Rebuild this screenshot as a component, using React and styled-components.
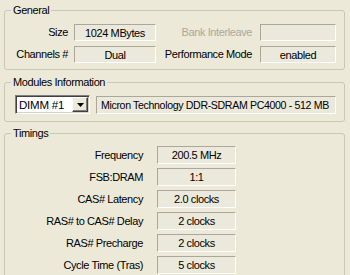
import React from 'react';
import styled, { createGlobalStyle } from 'styled-components';

const GlobalStyle = createGlobalStyle`
  html, body {
    margin: 0;
    padding: 0;
    background: #ece9d8;
  }
  body {
    font-family: "Liberation Sans", Arial, sans-serif;
    font-size: 11px;
    letter-spacing: -0.4px;
    color: #000;
  }
`;

const Window = styled.div`
  width: 350px;
  height: 275px;
  overflow: hidden;
  padding: 4px 5px 0 4px;
  box-sizing: border-box;
  display: flex;
  flex-direction: column;
  gap: ${p => p.gap || 6}px;
`;

const Group = styled.fieldset`
  margin: 0;
  margin-top: ${p => p.top || 0}px;
  border: 1px solid #c9c7b6;
  border-radius: 3px;
  padding: ${p => p.pad || '7px 8px 6px 0'};
  min-width: 0;
  flex-shrink: 0;
`;

const Legend = styled.legend`
  padding: 0 2px;
  margin-left: 6px;
  line-height: 13px;
  color: #000;
`;

const GeneralGrid = styled.div`
  display: grid;
  grid-template-columns: 63px 82px 1fr 76px;
  column-gap: 6px;
  row-gap: 5px;
  align-items: center;
`;

const Label = styled.div`
  text-align: right;
  padding-right: ${p => p.pr || 0}px;
  color: ${p => (p.disabled ? '#aca899' : '#000')};
  white-space: nowrap;
  min-height: 13px;
`;

const Value = styled.div`
  height: ${p => p.h || 17}px;
  box-sizing: border-box;
  border-top: 1px solid #aca899;
  border-left: 1px solid #aca899;
  border-right: 1px solid #ffffff;
  border-bottom: 1px solid #ffffff;
  background: #ebe9db;
  display: flex;
  align-items: center;
  justify-content: ${p => (p.left ? 'flex-start' : 'center')};
  padding-left: ${p => (p.left ? 5 : 0)}px;
  white-space: nowrap;
  overflow: hidden;
`;

const ModulesRow = styled.div`
  display: flex;
  align-items: center;
  gap: 6px;
  padding-left: 10px;
`;

const Select = styled.div`
  width: 75px;
  height: 19px;
  box-sizing: border-box;
  display: flex;
  background: #fff;
  border-top: 1px solid #808080;
  border-left: 1px solid #808080;
  border-right: 1px solid #fff;
  border-bottom: 1px solid #fff;
  box-shadow: inset 1px 1px 0 #404040, inset -1px -1px 0 #d4d0c8;
`;

const SelectText = styled.div`
  flex: 1;
  display: flex;
  align-items: center;
  padding-left: 3px;
  font-size: 11.5px;
  letter-spacing: -0.2px;
`;

const ArrowButton = styled.div`
  width: 16px;
  margin: 1px 1px 1px 0;
  box-sizing: border-box;
  background: #ece9d8;
  border-top: 1px solid #fff;
  border-left: 1px solid #fff;
  border-right: 1px solid #404040;
  border-bottom: 1px solid #404040;
  box-shadow: inset -1px -1px 0 #808080;
  display: flex;
  align-items: center;
  justify-content: center;
`;

const ModuleBox = styled(Value)`
  flex: 1;
  height: 18px;
  font-size: 10.6px;
  letter-spacing: -0.35px;
  padding-left: 4px;
`;

const TimingGrid = styled.div`
  display: grid;
  grid-template-columns: 146px 79px;
  column-gap: 6px;
  row-gap: 4px;
  align-items: center;
`;

const general = [
  ['Size', '1024 MBytes', 'Bank Interleave', '', true],
  ['Channels #', 'Dual', 'Performance Mode', 'enabled', false],
];

const timings = [
  ['Frequency', '200.5 MHz'],
  ['FSB:DRAM', '1:1'],
  ['CAS# Latency', '2.0 clocks'],
  ['RAS# to CAS# Delay', '2 clocks'],
  ['RAS# Precharge', '2 clocks'],
  ['Cycle Time (Tras)', '5 clocks'],
  ['', ''],
];

export default function App() {
  return (
    <>
      <GlobalStyle />
      <Window gap={6}>
        <Group>
          <Legend>General</Legend>
          <GeneralGrid>
            {general.map(([l1, v1, l2, v2, dis]) => (
              <React.Fragment key={l1}>
                <Label>{l1}</Label>
                <Value>{v1}</Value>
                <Label pr={2} disabled={dis}>{l2}</Label>
                <Value>{v2}</Value>
              </React.Fragment>
            ))}
          </GeneralGrid>
        </Group>
        <Group pad="6px 8px 7px 0">
          <Legend>Modules Information</Legend>
          <ModulesRow>
            <Select>
              <SelectText>DIMM #1</SelectText>
              <ArrowButton>
                <svg width="7" height="4" viewBox="0 0 7 4">
                  <path d="M0 0h7L3.5 4z" fill="#000" />
                </svg>
              </ArrowButton>
            </Select>
            <ModuleBox left>Micron Technology DDR-SDRAM PC4000 - 512 MB</ModuleBox>
          </ModulesRow>
        </Group>
        <Group pad="6px 8px 6px 0" top={-1}>
          <Legend>Timings</Legend>
          <TimingGrid>
            {timings.map(([l, v], i) => (
              <React.Fragment key={i}>
                <Label pr={8}>{l}</Label>
                <Value h={18}>{v}</Value>
              </React.Fragment>
            ))}
          </TimingGrid>
        </Group>
      </Window>
    </>
  );
}
